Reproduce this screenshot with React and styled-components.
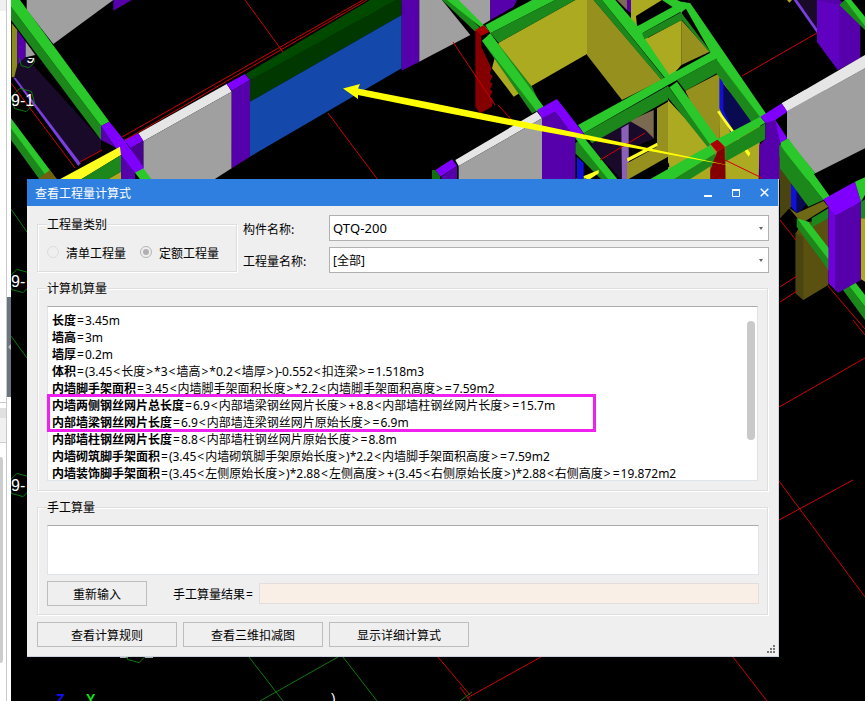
import React from 'react';
import styled, { createGlobalStyle } from 'styled-components';

const Global = createGlobalStyle`
  html, body { margin: 0; padding: 0; width: 865px; height: 701px; overflow: hidden; background: #000; }
  #root { width: 865px; height: 701px; }
`;

const FONT = `"Noto Sans CJK SC", "Noto Sans", sans-serif`;

const Page = styled.div`
  position: relative; display: flex; width: 865px; height: 701px; overflow: hidden;
  font-family: ${FONT}; font-size: 12px; color: #000;
`;
const Rail = styled.div`display: flex; width: 11px; flex: none; background: #fff;`;
const RailPanel = styled.div`
  width: 6px; border-right: 1px solid #c9c9c9; display: flex; flex-direction: column; flex: none;
`;
const RailTop = styled.div`height: 11px; background: #f0f0f0;`;
const RailBlank = styled.div`height: 391px; background: #fff; border-bottom: 1px solid #c9c9c9; box-sizing: content-box;`;
const RailGap = styled.div`height: 5px; background: #fff;`;
const RailHead = styled.div`height: 10px; background: #e0e0e0;`;
const RailTab = styled.div`height: 24px; background: #f0f0f0; border-bottom: 1px solid #d0d0d0;`;
const RailList = styled.div`flex: 1; padding-top: 14px; background: #fff;`;
const RailThumb = styled.div`width: 3px; height: 206px; background: #cdcdcd; border-radius: 0 3px 3px 0;`;
const RailEdge = styled.div`flex: 1; padding-top: 297px;`;
const Splitter = styled.div`height: 100px; background: #6b7580; display: flex; align-items: center; justify-content: center;`;
const SplitArrow = styled.div`width: 0; height: 0; border: 3px solid transparent; border-right: 3px solid #b4bac0; border-left: 0;`;

const Scene = styled.svg`flex: 1; display: block; background: #000;`;

const Dialog = styled.div`
  position: absolute; left: 27px; top: 179px; width: 752px; height: 478px; box-sizing: border-box;
  background: #efefef; border-right: 1px solid #c9d2de; border-bottom: 1px solid #c9d2de;
  display: flex; flex-direction: column;
`;
const TitleBar = styled.div`
  height: 27px; flex: none; background: #2e7fe0; color: #fff; display: flex; align-items: center;
  padding-left: 8px; justify-content: space-between;
`;
const TitleActions = styled.div`display: flex; gap: 20px; padding-right: 9px; align-items: center;`;
const Body = styled.div`padding: 9px 0 0 10px; display: flex; flex-direction: column; flex: 1; position: relative;`;
const TopRow = styled.div`display: flex; height: 58px; gap: 6px;`;
const Group = styled.div`
  position: relative; box-sizing: border-box; width: ${p => p.$w}px; height: ${p => p.$h}px;
  margin-top: ${p => p.$mt}px; flex: none;
  border: 1px solid #dedede; box-shadow: 1px 1px 0 #fff, inset 1px 1px 0 #fff;
  padding: ${p => p.$pad || 0};
`;
const Legend = styled.span`
  position: absolute; left: 9px; top: -10px; background: #efefef; line-height: 17px;
`;
const RadioRow = styled.div`display: flex; align-items: center; height: 100%; padding-left: 9px; padding-top: 8px; box-sizing: border-box;`;
const RadioItem = styled.label`display: flex; align-items: center; gap: 7px; margin-right: 14px; white-space: nowrap; flex: none;`;
const Radio = styled.span`
  box-sizing: border-box; width: 12px; height: 12px; border-radius: 50%; flex: none;
  border: 1px solid ${p => p.$on ? '#b5b5b5' : '#dcdcdc'}; display: flex; align-items: center; justify-content: center;
  &::after { content: ''; width: 6px; height: 6px; border-radius: 50%; background: ${p => p.$on ? '#b0b0b0' : 'transparent'}; }
`;
const Fields = styled.div`display: flex; flex-direction: column; gap: 6px;`;
const FieldRow = styled.div`display: flex; align-items: center; height: 26px;`;
const FieldLabel = styled.span`width: 86px; flex: none;`;
const Combo = styled.div`
  box-sizing: border-box; width: 440px; height: 26px; background: #fff; border: 1px solid #b0b0b0;
  display: flex; align-items: center; justify-content: space-between; padding: 0 5px 0 3px;
`;
const Caret = styled.span`width: 0; height: 0; border: 2.5px solid transparent; border-top: 3px solid #666; border-bottom: 0;`;
const ComboLatin = styled.span`font-family: "Noto Sans", sans-serif; font-size: 13px; letter-spacing: 0.1px;`;
const Latin = styled.span`font-family: "Noto Sans", sans-serif; font-size: 12px;`;
const Sym = styled.span`font-family: "Noto Sans", sans-serif; font-size: 12px; margin: 0 1px;`;
const TextBox = styled.div`
  position: relative; box-sizing: border-box; width: 711px; height: 175px; background: #fff;
  border: 1px solid #dfe4ea; border-top-color: #aaa; padding: 4px 0 0 4px;
`;
const Line = styled.div`line-height: 17px; height: 17px; white-space: nowrap;`;
const Key = styled.b`font-weight: 700;`;
const Highlight = styled.div`
  position: absolute; left: -1px; top: 87px; width: 549px; height: 38px; box-sizing: border-box;
  border: 3px solid #f020f0; pointer-events: none;
`;
const ScrollThumb = styled.div`
  position: absolute; left: 699px; top: 14px; width: 8px; height: 119px; background: #c9c9c9; border-radius: 4px;
`;
const Manual = styled.div`
  box-sizing: border-box; width: 712px; height: 50px; background: #fff;
  border: 1px solid #dfe4ea; border-top-color: #aaa;
`;
const ManualRow = styled.div`display: flex; align-items: center; height: 25px; margin-top: 6px;`;
const Button = styled.button`
  box-sizing: border-box; width: ${p => p.$w}px; height: 25px; padding: 0; flex: none;
  background: #efefef; border: 1px solid #bdbdbd; border-radius: 0;
  font: inherit; color: #000;
`;
const ResultLabel = styled.span`margin-left: 26px; width: 86px; flex: none; white-space: nowrap;`;
const ResultField = styled.div`
  box-sizing: border-box; width: 500px; height: 21px; background: #f9efe6; border: 1px solid #e3dedb;
`;
const Actions = styled.div`display: flex; gap: 6px; margin-top: 7px;`;
const Grip = styled.svg`position: absolute; right: 3px; bottom: 3px;`;

const mix = (text) => text.split(/([\u4e00-\u9fff]+|[<>=+])/).filter(Boolean).map((part, i) => {
  if (/^[\u4e00-\u9fff]/.test(part)) return <React.Fragment key={i}>{part}</React.Fragment>;
  if (/^[<>=+]$/.test(part)) return <Sym key={i}>{part}</Sym>;
  return <Latin key={i}>{part}</Latin>;
});

const G = '#2ac82a', GD = '#1c881c', PB = '#8000ff', PD = '#5500aa', W = '#e6e6e6', GR = '#a0a0a0',
  Y = '#acaa20', YD = '#96901e', RB = '#aa0000', RD = '#840000', BK = '#1a0a2a';

const Z1 = [
  [GR, '80,0 340,0 160,132 80,30'],
  [PD, '340,0 395,0 340,32'],
  ['#8a8a20', '35,70 52,90 52,232 35,232'],
  [PD, '52,90 77,125 77,172 52,195'],
  [GR, '77,125 106,165 77,172'],
  [BK, '77,170 303,420 303,450 235,490 42,235 52,195'],
  ['#7a3fe0', '40,234 47,234 242,490 235,498'],
  ['#004a00', '737,222 1110,0 1205,0 1205,10 750,240'],
  ['#003800', '750,240 1205,-10 1205,45 750,305'],
  ['#1448aa', '750,305 1205,45 1205,205 750,470'],
  [PD, '1205,0 1258,0 1258,185 1205,212'],
  [GR, '1258,0 1296,0 1296,165 1258,185'],
  [W, '415,400 680,252 695,275 430,424'],
  [GR, '430,424 695,275 695,505 640,540 430,540'],
  [PB, '680,252 735,222 750,240 695,272'],
  [PD, '695,272 750,240 750,470 695,505'],
  [GD, '33,20 303,378 303,420 33,60'],
  [G, '60,0 328,365 303,378 33,20 33,0'],
  [GD, '33,420 120,540 160,540 33,375'],
  [G, '33,355 172,540 148,540 33,385'],
  [PB, '372,420 415,400 430,422 392,445'],
  ['#4a0090', '392,445 430,422 430,505 392,530'],
  [PD, '303,378 345,440 363,465 363,540 405,540 405,515 363,450 303,420'],
  [PB, '303,378 328,365 372,420 430,500 430,510 405,518 345,440'],
  ['#706010', '110,540 150,510 172,540'],
  ['#ffff20', '175,540 360,440 363,465 240,540'],
  [GD, '240,540 363,465 363,515 320,540'],
  [Y, '320,540 363,515 363,540'],
  [G, '405,518 430,505 456,540 422,540'],
];

const Z2 = [
  [GR, '0,0 30,0 115,105 0,165'],
  [GR, '60,0 175,0 175,60 150,75'],
  [PD, '175,0 255,0 245,20 175,60'],
  [GD, '30,0 60,0 145,85 130,95'],
  [G, '45,0 80,0 170,90 150,85'],
  [YD, '465,0 485,0 690,240 570,300 465,165'],
  [Y, '200,128 430,0 465,0 465,162 298,258 245,290 180,205'],
  [G, '160,75 300,0 370,0 175,100'],
  [GD, '175,100 370,0 430,0 200,128'],
  [RD, '130,90 148,108 148,140 178,205 174,222 182,228 174,245 182,252 174,268 182,274 174,290 182,296 180,320 145,340 130,322'],
  [RB, '130,90 155,75 172,95 148,108'],
  [GD, '150,122 300,340 330,325 300,260 180,108'],
  [G, '175,100 335,320 315,335 150,122'],
  ['#7a6a50', '555,0 585,0 585,30'],
  [PD, '585,0 597,0 597,40 585,30'],
  [Y, '597,0 690,0 612,48 615,80 597,60'],
  [GD, '485,0 510,0 706,245 688,240'],
  [G, '510,0 550,0 735,215 708,245'],
  [YD, '748,60 833,155 748,195'],
  [Y, '640,118 748,60 748,195 735,210 712,225'],
  [G, '605,85 750,5 765,25 630,100'],
  [GD, '630,100 750,35 750,60 637,118'],
  [G, '690,0 735,0 770,15 748,38'],
  [Y, '860,220 985,355 980,540 880,540 880,430 862,420'],
  [YD, '760,272 862,220 862,420 880,430 880,540 835,540 835,435'],
  ['#0a0a50', '865,240 950,345 985,352 905,395 865,320'],
  ['#1010d8', '862,232 874,246 874,330 900,385 896,398 862,325'],
  ['#ffff20', '855,335 862,332 955,460 950,470'],
  [GD, '748,38 836,155 852,178 990,352 960,368 855,222 835,160 750,60'],
  [G, '750,5 775,10 1005,345 985,352 852,178 835,155'],
  [BK, '480,430 590,365 590,540 570,540 480,445'],
  ['#8a60b8', '568,385 590,372 590,540 570,540'],
  ['#7a6a50', '592,362 665,330 665,415 600,440'],
  [BK, '592,362 640,390 665,415 600,445 592,440'],
  [YD, '675,325 708,305 708,470 585,540 585,490 675,440'],
  [Y, '708,300 835,435 835,540 708,540'],
  ['#ffff20', '585,475 675,428 677,438 587,485'],
  ['#000', '625,530 710,488 712,500 650,540'],
  [G, '438,375 850,150 855,175 708,255 455,400'],
  [GD, '455,400 708,258 708,300 480,430'],
  [GD, '735,240 855,175 855,220 760,272'],
  [GD, '708,258 835,432 830,445 690,270'],
  [G, '735,245 860,420 835,435 712,262'],
  [GD, '720,540 850,460 850,490 770,540'],
  [G, '650,540 835,435 850,460 720,540'],
  [RD, '835,510 855,455 878,440 880,540 835,540'],
  [RB, '835,432 858,418 878,440 855,455'],
  [G, '855,418 985,350 1000,368 880,440'],
  [GD, '880,440 1000,370 1000,418 880,485'],
  [W, '70,480 315,335 330,355 80,498'],
  [GR, '80,498 330,355 330,540 80,540'],
  [GD, '430,430 450,415 530,540 510,540 430,460'],
  [G, '430,415 450,405 558,540 530,540'],
  [PB, '10,510 60,478 75,498 25,530'],
  [PD, '28,530 75,498 75,540 28,540'],
  ['#107010', '0,510 10,510 25,530 25,540 0,540'],
  ['#ffff20', '450,530 500,510 500,520 470,540'],
  [G, '420,540 450,530 470,540'],
  [PD, '330,355 370,335 430,415 430,540 330,540'],
  [PB, '315,330 375,297 455,400 430,415 370,335 330,355'],
  ['#1010d8', '435,470 455,490 455,540 435,540'],
  [BK, '1085,0 1155,0 1155,95'],
  ['#7a3fe0', '1085,0 1095,0 1158,90 1155,100'],
  [PD, '1155,0 1222,0 1285,40 1285,175 1218,210 1155,125'],
  ['#6000c0', '1155,0 1222,15 1222,205 1218,210 1155,125'],
  [GD, '1222,15 1238,0 1299,75 1299,90'],
  [G, '1238,0 1258,0 1299,50 1299,78'],
  [Y, '1065,0 1080,0 1072,8'],
  ['#a0a0a0', '1065,335 1299,205 1299,445 1150,520 1065,420'],
  [W, '1050,310 1299,165 1299,205 1065,335'],
  [PB, '985,350 1050,310 1066,335 1030,360 1066,415 1045,430 1000,368'],
  [PD, '1000,368 1030,360 1045,430 1045,540 982,540 982,435 1000,418'],
  [GD, '1042,435 1042,470 1095,540 1150,540'],
  [G, '1045,428 1068,415 1150,520 1115,540 1100,540'],
  ['#4a4410', '1042,470 1078,520 1078,540 1042,540'],
];

const Z10 = [
  [W, '20,40 90,0 150,0 38,62'],
  [GR, '38,62 150,0 270,0 270,140 120,245 38,148'],
  ['#4a4410', '15,210 48,240 48,350 15,385'],
  ['#0a0a50', '65,270 105,325 72,372 65,370'],
  ['#1010d8', '48,255 65,270 65,370 48,350'],
  [GD, '15,165 145,330 100,350 15,235'],
  [G, '40,145 165,320 145,330 15,165'],
  ['#5a5010', '62,430 80,400 160,385 160,585 85,630 62,610'],
  ['#4a4410', '62,430 85,440 85,630 62,610'],
  ['#6f6814', '40,352 65,370 145,333 160,350 80,400'],
  [GD, '110,385 160,355 160,385 110,412'],
  [GD, '65,385 65,410 270,690 270,650'],
  [G, '65,385 100,395 270,615 270,650'],
  ['#7000d8', '160,345 180,378 180,600 190,608 160,580'],
  [PD, '180,378 258,335 258,570 190,608 180,600'],
  [PB, '145,328 240,275 258,335 180,378'],
  [G, '240,275 270,262 270,315 258,335'],
  [GD, '258,335 270,328 270,385 258,385'],
  [Y, '258,385 270,385 270,575 258,568'],
];

const Lines = [
  ['#d00000', 245, 0, 283, 52], ['#d00000', 328, 113, 378, 180], ['#d00000', 122, 137, 363, 0],
  ['#d00000', 125, 140, 367, 0], ['#d00000', 80, 162, 102, 150], ['#d00000', 11, 83, 75, 168],
  ['#d00000', 453, 42, 495, 105], ['#d00000', 498, 105, 512, 120], ['#d00000', 742, 76, 817, 33],
  ['#d00000', 600, 160, 645, 133], ['#d00000', 725, 160, 762, 178],
  ['#d00000', 779, 520, 853, 480], ['#d00000', 779, 481, 865, 597], ['#d00000', 733, 657, 767, 701],
  ['#d00000', 541, 657, 467, 698], ['#d00000', 460, 687, 470, 701], ['#d00000', 438, 657, 470, 695],
  ['#d00000', 779, 407, 865, 358], ['#d00000', 853, 320, 865, 335], ['#d00000', 780, 220, 796, 240],
  ['#d00000', 780, 287, 797, 276], ['#d00000', 780, 302, 797, 291], ['#d00000', 828, 286, 865, 329],
  ['#0b7a0b', 249, 657, 283, 701], ['#0b7a0b', 260, 701, 338, 657], ['#0b7a0b', 343, 657, 377, 701],
  ['#0b7a0b', 11, 209, 27, 232], ['#0b7a0b', 11, 336, 27, 358], ['#0b7a0b', 460, 701, 472, 692],
  ['#b0b0b0', 120, 657.5, 128, 657.5], ['#b0b0b0', 145, 657.5, 153, 657.5],
];

const Hex = ({ x, y, r = 12 }) => {
  const pts = [0, 60, 120, 180, 240, 300].map(a => {
    const t = (a + 15) * Math.PI / 180;
    return `${x + r * Math.cos(t)},${y + r * Math.sin(t)}`;
  }).join(' ');
  return <polygon points={pts} fill="none" stroke="#0b7a0b" strokeWidth="1" />;
};

const Polys = ({ list, transform }) => (
  <g transform={transform}>
    {list.map(([f, p], i) => <polygon key={i} fill={f} points={p} />)}
  </g>
);

const S = 'scale(0.33333)';

const CadScene = () => (
  <Scene width="854" height="701" viewBox="11 0 854 701">
    <defs>
      <clipPath id="lowerNine"><rect x="11" y="58" width="40" height="16" /></clipPath>
    </defs>
    <rect x="11" y="0" width="854" height="701" fill="#000" />
    <Polys list={Z1} transform={S} />
    <Polys list={Z2} transform={`translate(432,0) ${S}`} />
    <Polys list={Z10} transform={`translate(775,90) ${S}`} />
    {Lines.map(([c, a, b, d, e], i) => <line key={i} x1={a} y1={b} x2={d} y2={e} stroke={c} strokeWidth="1" />)}
    <polygon points="343,88.5 360,84 358,88.5 432,103 540,125 732,166 540,131 432,110 358,95 358,99" fill="#ffff00" />
    <g clipPath="url(#lowerNine)">
      <Hex x={27} y={60} r={8} />
      <text x="26" y="63" fill="#fff" fontFamily='"Liberation Sans", sans-serif' fontSize="16">9</text>
    </g>
    <Hex x={23} y={100} />
    <Hex x={20} y={281} />
    <Hex x={20} y={485} />
    <Hex x={136} y={651} />
    <g fill="#fff" fontFamily='"Liberation Sans", sans-serif' fontSize="16">
      <text x="11" y="106">9-1</text>
      <text x="11" y="287">9-</text>
      <text x="11" y="491">9-</text>
    </g>
    <text x="331" y="704" fill="#fff" fontFamily='"Liberation Sans", sans-serif' fontSize="14">)</text>
    <g fontFamily='"Liberation Sans", sans-serif' fontSize="14" fontWeight="700">
      <text x="56" y="704" fill="#1010ff">Z</text>
      <text x="86" y="704" fill="#10e010">Y</text>
    </g>
  </Scene>
);

const rows = [
  ['长度', '=3.45m'],
  ['墙高', '=3m'],
  ['墙厚', '=0.2m'],
  ['体积', '=(3.45<长度>*3<墙高>*0.2<墙厚>)-0.552<扣连梁>=1.518m3'],
  ['内墙脚手架面积', '=3.45<内墙脚手架面积长度>*2.2<内墙脚手架面积高度>=7.59m2'],
  ['内墙两侧钢丝网片总长度', '=6.9<内部墙梁钢丝网片长度>+8.8<内部墙柱钢丝网片长度>=15.7m'],
  ['内部墙梁钢丝网片长度', '=6.9<内部墙连梁钢丝网片原始长度>=6.9m'],
  ['内部墙柱钢丝网片长度', '=8.8<内部墙柱钢丝网片原始长度>=8.8m'],
  ['内墙砌筑脚手架面积', '=(3.45<内墙砌筑脚手架原始长度>)*2.2<内墙脚手架面积高度>=7.59m2'],
  ['内墙装饰脚手架面积', '=(3.45<左侧原始长度>)*2.88<左侧高度>+(3.45<右侧原始长度>)*2.88<右侧高度>=19.872m2'],
];

export default function App() {
  return (
    <>
      <Global />
      <Page>
        <Rail>
          <RailPanel>
            <RailTop />
            <RailBlank />
            <RailGap />
            <RailHead />
            <RailTab />
            <RailList><RailThumb /></RailList>
          </RailPanel>
          <RailEdge><Splitter><SplitArrow /></Splitter></RailEdge>
        </Rail>
        <CadScene />
        <Dialog>
          <TitleBar>
            查看工程量计算式
            <TitleActions>
              <svg width="8" height="8" viewBox="0 0 8 8"><rect x="0" y="6" width="8" height="2" fill="#fff" /></svg>
              <svg width="8" height="8" viewBox="0 0 8 8"><path d="M.5 1.5h7v6h-7z" fill="none" stroke="#fff" /><rect width="8" height="2" fill="#fff" /></svg>
              <svg width="9" height="9" viewBox="0 0 9 9"><path d="M.7.7l7.6 7.6M8.3.7L.7 8.3" stroke="#fff" strokeWidth="1.4" fill="none" /></svg>
            </TitleActions>
          </TitleBar>
          <Body>
            <TopRow>
              <Group $w={200} $h={48} $mt={9}>
                <Legend>工程量类别</Legend>
                <RadioRow>
                  <RadioItem><Radio />清单工程量</RadioItem>
                  <RadioItem><Radio $on />定额工程量</RadioItem>
                </RadioRow>
              </Group>
              <Fields>
                <FieldRow><FieldLabel>构件名称:</FieldLabel><Combo><ComboLatin>QTQ-200</ComboLatin><Caret /></Combo></FieldRow>
                <FieldRow><FieldLabel>工程量名称:</FieldLabel><Combo><span>{mix('[全部]')}</span><Caret /></Combo></FieldRow>
              </Fields>
            </TopRow>
            <Group $w={731} $h={203} $mt={15} $pad="17px 0 0 9px">
              <Legend>计算机算量</Legend>
              <TextBox>
                {rows.map(([k, v]) => <Line key={k}><Key>{k}</Key>{mix(v)}</Line>)}
                <Highlight />
                <ScrollThumb />
              </TextBox>
            </Group>
            <Group $w={731} $h={108} $mt={16} $pad="17px 0 0 9px">
              <Legend>手工算量</Legend>
              <Manual />
              <ManualRow>
                <Button $w={100}>重新输入</Button>
                <ResultLabel>手工算量结果{mix('=')}</ResultLabel>
                <ResultField />
              </ManualRow>
            </Group>
            <Actions>
              <Button $w={140}>查看计算规则</Button>
              <Button $w={140}>查看三维扣减图</Button>
              <Button $w={140}>显示详细计算式</Button>
            </Actions>
            <Grip width="8" height="8" viewBox="0 0 8 8" fill="#777">
              <rect x="6" y="0" width="2" height="2" />
              <rect x="3" y="3" width="2" height="2" /><rect x="6" y="3" width="2" height="2" />
              <rect x="0" y="6" width="2" height="2" /><rect x="3" y="6" width="2" height="2" /><rect x="6" y="6" width="2" height="2" />
            </Grip>
          </Body>
        </Dialog>
      </Page>
    </>
  );
}
